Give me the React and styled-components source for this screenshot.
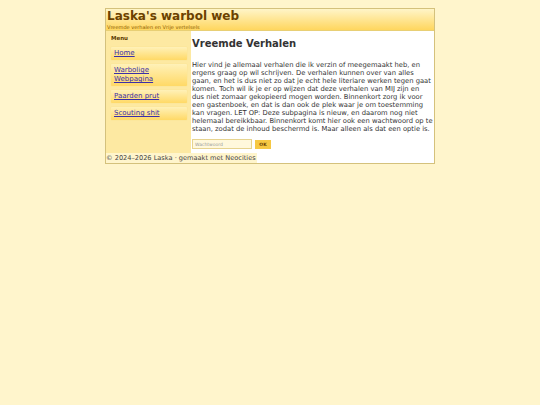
import { styled, createGlobalStyle } from "styled-components";

const GlobalStyle = createGlobalStyle`
    body {
        margin: 0;
        background: #fff5cc;
        font-family: "DejaVu Sans", Verdana, sans-serif;
        color: #333;
    }
`

const Frame = styled.div`
    width: 330px;
    margin: 8px auto 0;
    box-sizing: border-box;
    border: 1px solid #d4c17c;
    background: #fff;
    display: grid;
    grid-template-columns: 85px 1fr;
`

const Header = styled.header`
    grid-column: 1 / -1;
    height: 21px;
    padding: 0 1px;
    background: linear-gradient(#fff5c8, #ffd65e);
    border-bottom: 1px solid #e8cf75;
    display: flex;
    flex-direction: column;
`

const Title = styled.h1`
    margin: 0;
    font-size: 12px;
    line-height: 15px;
    color: #6b4100;
`

const Tagline = styled.div`
    font-size: 5px;
    line-height: 6px;
    color: #8c5a00;
`

const Sidebar = styled.nav`
    background: #fde9a2;
    padding: 4px 4px 8px 5px;
    display: flex;
    flex-direction: column;
    gap: 4px;
`

const MenuLabel = styled.div`
    font-size: 5.5px;
    font-weight: bold;
    color: #5a3a00;
    line-height: 7px;
    margin-bottom: 1px;
`

const MenuLink = styled.a`
    display: block;
    padding: 2px 3px;
    font-size: 7px;
    line-height: 9px;
    color: #3b2fa8;
    text-decoration: underline;
    background: linear-gradient(#fff1b8, #ffd966);
    border-radius: 1px;
    box-shadow: 0 0 1px #f0cf68;
`

const Content = styled.main`
    padding: 7px 0 4px 1px;
    min-width: 0;
`

const Heading = styled.h2`
    margin: 0 0 11px;
    font-size: 10px;
    line-height: 12px;
    color: #333;
`

const Text = styled.p`
    width: 241.2px;
    margin: 0 0 6px;
    font-size: 6.77px;
    line-height: 8px;
    color: #333;
`

const Form = styled.form`
    display: flex;
    gap: 3px;
    align-items: center;
`

const Input = styled.input`
    width: 60px;
    height: 10px;
    box-sizing: border-box;
    padding: 0 2px;
    border: 1px solid #e6d38f;
    background: #fff8dc;
    font-family: inherit;
    font-size: 4.5px;
    &::placeholder {
        color: #999;
    }
`

const Button = styled.button`
    width: 16px;
    height: 9px;
    padding: 0;
    border: none;
    background: #f6c843;
    color: #6b4100;
    font-family: inherit;
    font-size: 4.5px;
    font-weight: bold;
`

const Footer = styled.footer`
    grid-column: 1 / -1;
    height: 10px;
    display: flex;
`

const FooterNote = styled.span`
    background: #fff5cc;
    padding-right: 1px;
    font-size: 6.6px;
    line-height: 10px;
    color: #444;
    white-space: nowrap;
`

const menu = ["Home", "Warbolige Webpagina", "Paarden prut", "Scouting shit"];

function App() {return(
    <>
        <GlobalStyle />
        <Frame>
            <Header>
                <Title>Laska's warbol web</Title>
                <Tagline>Vreemde verhalen en Vrije vertelsels</Tagline>
            </Header>
            <Sidebar>
                <MenuLabel>Menu</MenuLabel>
                {menu.map((item) => <MenuLink key={item} href="#">{item}</MenuLink>)}
            </Sidebar>
            <Content>
                <Heading>Vreemde Verhalen</Heading>
                <Text>Hier vind je allemaal verhalen die ik verzin of meegemaakt heb, en ergens graag op wil schrijven. De verhalen kunnen over van alles gaan, en het is dus niet zo dat je echt hele literiare werken tegen gaat komen. Toch wil ik je er op wijzen dat deze verhalen van MIJ zijn en dus niet zomaar gekopieerd mogen worden. Binnenkort zorg ik voor een gastenboek, en dat is dan ook de plek waar je om toestemming kan vragen. LET OP: Deze subpagina is nieuw, en daarom nog niet helemaal bereikkbaar. Binnenkort komt hier ook een wachtwoord op te staan, zodat de inhoud beschermd is. Maar alleen als dat een optie is.</Text>
                <Form onSubmit={(e) => e.preventDefault()}>
                    <Input type="password" placeholder="Wachtwoord" />
                    <Button type="submit">OK</Button>
                </Form>
            </Content>
            <Footer>
                <FooterNote>© 2024–2026 Laska · gemaakt met Neocities</FooterNote>
            </Footer>
        </Frame>
    </>
)};

export default App;
